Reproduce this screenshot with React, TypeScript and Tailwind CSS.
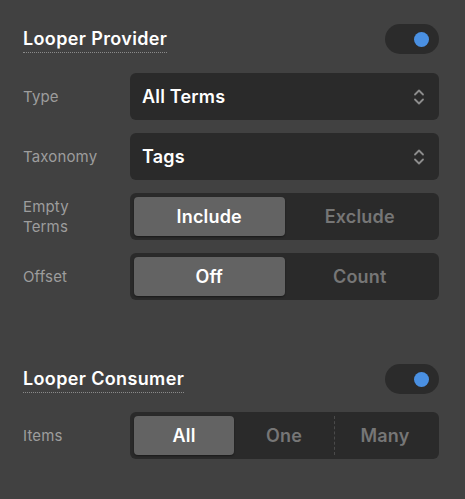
import React from "react"

const FONT = { fontFamily: "Inter, 'Noto Sans', sans-serif" }

function Toggle() {
  return (
    <div className="h-[30px] w-[54px] rounded-full bg-[#2b2b2b] flex items-center justify-end pr-[10px]">
      <div className="h-[15px] w-[15px] rounded-full bg-[#4a90e2]" />
    </div>
  )
}

function SectionHeader({ title }: { title: string }) {
  return (
    <div className="flex items-center justify-between">
      <span className="text-[18px] font-semibold tracking-[0.02em] text-white leading-[22px] border-b border-dotted border-[#8a8a8a] pb-[2px] mt-[2px]">
        {title}
      </span>
      <Toggle />
    </div>
  )
}

function Row({ label, children }: { label: React.ReactNode; children: React.ReactNode }) {
  return (
    <div className="flex items-center">
      <div className="w-[107px] shrink-0 text-[15px] leading-[20px] tracking-[0.01em] text-[#9d9d9d]">{label}</div>
      <div className="flex-1">{children}</div>
    </div>
  )
}

function Select({ value }: { value: string }) {
  return (
    <div className="h-[47px] rounded-[6px] bg-[#2a2a2a] flex items-center justify-between pl-[12px] pr-[14px]">
      <span className="text-[18px] font-semibold tracking-[0.01em] text-white">{value}</span>
      <svg width="12" height="18" viewBox="0 0 12 18" fill="none" stroke="#8c8c8c" strokeWidth="1.8" strokeLinecap="round" strokeLinejoin="round">
        <path d="M2 6.5 L6 2.5 L10 6.5" />
        <path d="M2 11.5 L6 15.5 L10 11.5" />
      </svg>
    </div>
  )
}

function Segmented({ options, active, dashed }: { options: string[]; active: number; dashed?: boolean }) {
  return (
    <div className="h-[47px] rounded-[6px] bg-[#2a2a2a] flex items-center p-[4px]">
      {options.map((opt, i) => {
        const isActive = i === active
        const showSep = dashed && i > 0 && i - 1 !== active && !isActive
        return (
          <div
            key={opt}
            className={`flex-1 h-full flex items-center justify-center text-[18px] font-semibold tracking-[0.01em] ${
              isActive ? "bg-[#636363] text-white rounded-[4px] shadow-[0_1px_2px_rgba(0,0,0,0.4)]" : "text-[#767676]"
            } ${showSep ? "border-l border-dashed border-[#4a4a4a]" : ""}`}
          >
            {opt}
          </div>
        )
      })}
    </div>
  )
}

export default function App() {
  return (
    <div className="w-[465px] h-[499px] bg-[#414141] pl-[23px] pr-[26px] pt-[24px] antialiased" style={FONT}>
      <SectionHeader title="Looper Provider" />

      <div className="mt-[19px] flex flex-col gap-[13px]">
        <Row label="Type">
          <Select value="All Terms" />
        </Row>
        <Row label="Taxonomy">
          <Select value="Tags" />
        </Row>
        <Row label={<>Empty<br />Terms</>}>
          <Segmented options={["Include", "Exclude"]} active={0} />
        </Row>
        <Row label="Offset">
          <Segmented options={["Off", "Count"]} active={0} />
        </Row>
      </div>

      <div className="mt-[64px]">
        <SectionHeader title="Looper Consumer" />
      </div>

      <div className="mt-[18px]">
        <Row label="Items">
          <Segmented options={["All", "One", "Many"]} active={0} dashed />
        </Row>
      </div>
    </div>
  )
}
